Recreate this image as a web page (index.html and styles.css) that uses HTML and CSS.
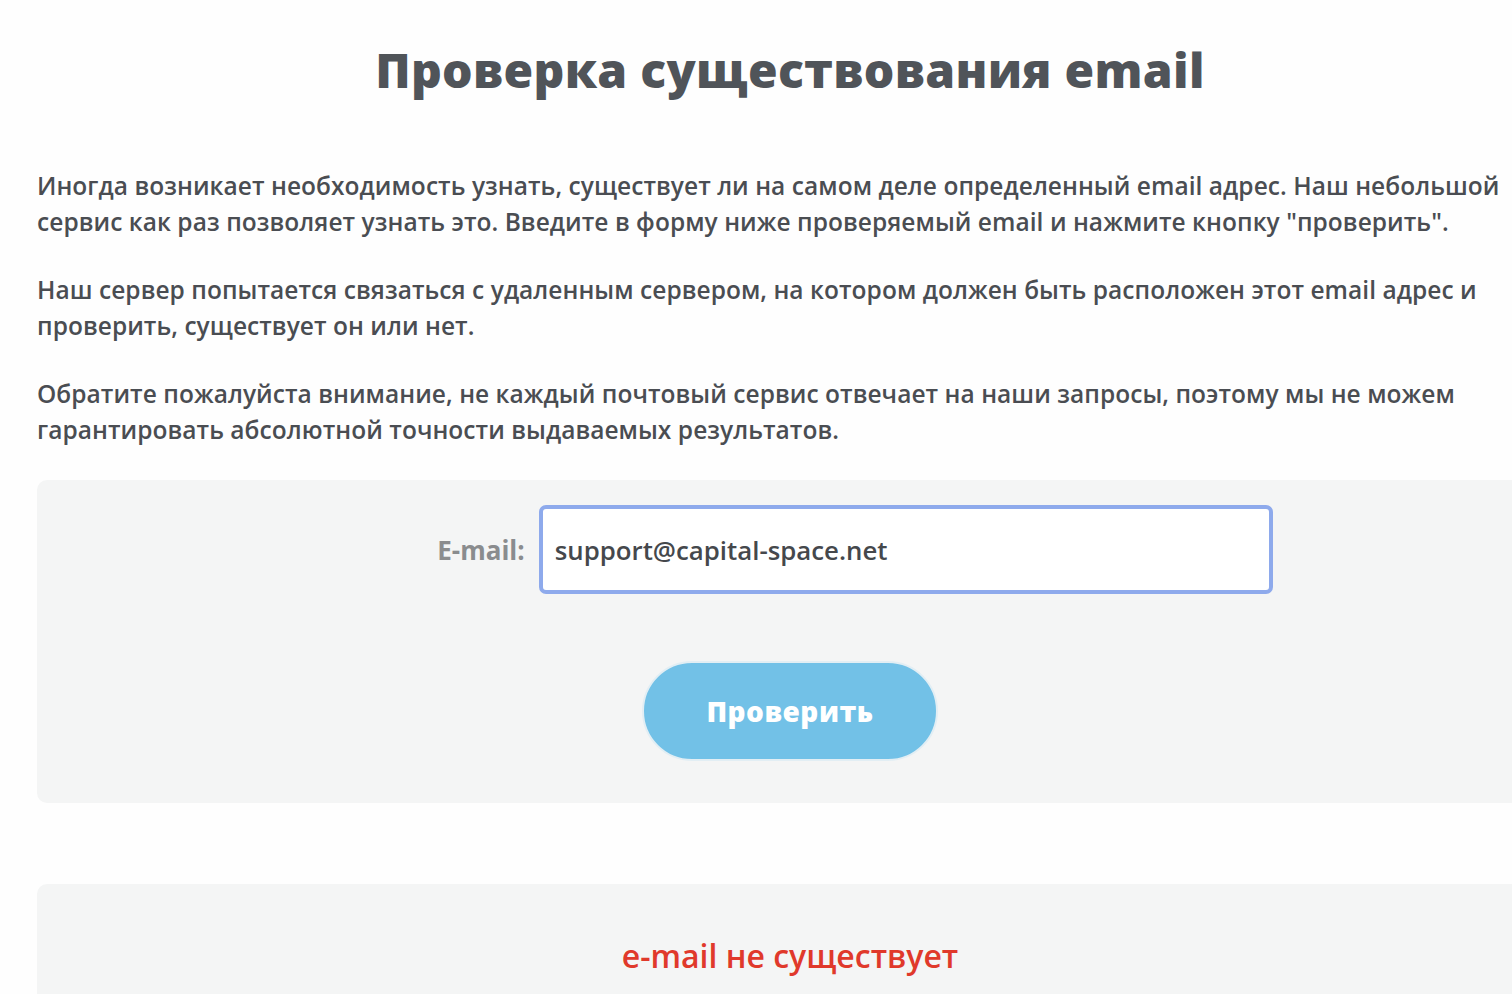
FILE: index.html
```html
<!DOCTYPE html>
<html lang="ru">
<head>
<meta charset="utf-8">
<title>Проверка существования email</title>
<link rel="stylesheet" href="styles.css">
</head>
<body>
<div class="page">
  <h1 class="title">Проверка существования email</h1>
  <div class="intro">
    <p>Иногда возникает необходимость узнать, существует ли на самом деле определенный email адрес. Наш небольшой сервис как раз позволяет узнать это. Введите в форму ниже проверяемый email и нажмите кнопку "проверить".</p>
    <p>Наш сервер попытается связаться с удаленным сервером, на котором должен быть расположен этот email адрес и проверить, существует он или нет.</p>
    <p>Обратите пожалуйста внимание, не каждый почтовый сервис отвечает на наши запросы, поэтому мы не можем гарантировать абсолютной точности выдаваемых результатов.</p>
  </div>
  <form class="panel form-panel">
    <div class="field-row">
      <label class="field-label" for="email">E-mail:</label>
      <input class="field-input" id="email" type="text" value="support@capital-space.net">
    </div>
    <button class="check-btn" type="button">Проверить</button>
  </form>
  <div class="panel result-panel">
    <div class="result-text">e-mail не существует</div>
  </div>
</div>
</body>
</html>
```

FILE: styles.css
```css
html, body {
  margin: 0;
  padding: 0;
  background: #fefefe;
  overflow: hidden;
}
body {
  font-family: "Open Sans", "Noto Sans", sans-serif;
  color: #4a4d52;
}
.page {
  width: 1506px;
  margin-left: 37px;
  padding-top: 38px;
}
.title {
  margin: 0;
  text-align: center;
  font-size: 48px;
  font-weight: 800;
  line-height: 64px;
  color: #505459;
  letter-spacing: 0.3px;
}
.intro {
  margin-top: 66px;
}
.intro p {
  margin: 0 0 32px 0;
  font-size: 24.5px;
  line-height: 36px;
  font-weight: 600;
  width: 1470px;
  letter-spacing: 0.05px;
}
.panel {
  background: #f4f5f5;
  border-radius: 10px;
}
.form-panel {
  margin-top: 32px;
  height: 323px;
  box-sizing: border-box;
  padding-top: 25px;
  display: flex;
  flex-direction: column;
  align-items: center;
}
.field-row {
  display: flex;
  align-items: center;
  gap: 14px;
  margin-left: 130px;
}
.field-label {
  font-size: 26px;
  font-weight: 700;
  color: #8a8c8e;
}
.field-input {
  width: 734px;
  height: 89px;
  box-sizing: border-box;
  border: 4px solid #8eaaec;
  border-radius: 7px;
  background: #fff;
  padding: 0 12px;
  font-family: "Open Sans", "Noto Sans", sans-serif;
  font-size: 25.8px;
  font-weight: 600;
  color: #45484c;
  outline: none;
}
.check-btn {
  margin-top: 67px;
  width: 296px;
  height: 100px;
  border-radius: 50px;
  border: 2px solid #e2eef4;
  background: #72c1e7;
  color: #fff;
  font-family: "Open Sans", "Noto Sans", sans-serif;
  font-size: 28px;
  font-weight: 800;
  letter-spacing: 0.5px;
  cursor: pointer;
}
.result-panel {
  margin-top: 81px;
  height: 200px;
  padding-top: 50px;
  box-sizing: border-box;
  text-align: center;
}
.result-text {
  font-size: 32px;
  font-weight: 600;
  color: #e0392b;
}
```
